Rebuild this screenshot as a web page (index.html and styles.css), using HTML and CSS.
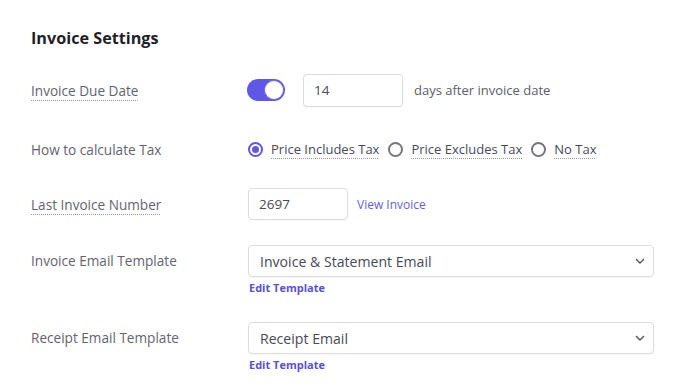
FILE: index.html
```html
<!DOCTYPE html>
<html lang="en">
<head>
    <meta charset="UTF-8">
    <meta name="viewport" content="width=device-width, initial-scale=1.0">
    <title>Invoice Settings</title>
    <link rel="stylesheet" href="styles.css">
</head>
<body>
    <div class="settings">
        <h2>Invoice Settings</h2>

        <div class="row row-due">
            <div class="label"><span class="hint">Invoice Due Date</span></div>
            <div class="field">
                <label class="switch">
                    <input type="checkbox" checked>
                    <span class="slider"></span>
                </label>
                <input type="text" class="input input-days" value="14">
                <span class="suffix">days after invoice date</span>
            </div>
        </div>

        <div class="row row-tax">
            <div class="label">How to calculate Tax</div>
            <div class="field radios">
                <label class="radio"><input type="radio" name="tax" checked><span class="hint">Price Includes Tax</span></label>
                <label class="radio"><input type="radio" name="tax"><span class="hint">Price Excludes Tax</span></label>
                <label class="radio"><input type="radio" name="tax"><span class="hint">No Tax</span></label>
            </div>
        </div>

        <div class="row row-number">
            <div class="label"><span class="hint">Last Invoice Number</span></div>
            <div class="field">
                <input type="text" class="input input-number" value="2697">
                <a href="#" class="view-link">View Invoice</a>
            </div>
        </div>

        <div class="row row-template">
            <div class="label">Invoice Email Template</div>
            <div class="field column">
                <select class="select">
                    <option>Invoice &amp; Statement Email</option>
                </select>
                <a href="#" class="edit-link">Edit Template</a>
            </div>
        </div>

        <div class="row row-template row-receipt">
            <div class="label">Receipt Email Template</div>
            <div class="field column">
                <select class="select">
                    <option>Receipt Email</option>
                </select>
                <a href="#" class="edit-link">Edit Template</a>
            </div>
        </div>
    </div>
</body>
</html>
```

FILE: styles.css
```css
* {
    margin: 0;
    padding: 0;
    box-sizing: border-box;
    font-family: 'Open Sans', 'Noto Sans', sans-serif;
}

body {
    background: #fff;
    color: #3d3d48;
}

.settings {
    padding: 27px 34px 0 31px;
}

.settings h2 {
    font-size: 16.2px;
    font-weight: 700;
    line-height: 22px;
    color: #1f1f29;
    margin-bottom: 24px;
}

.row {
    display: flex;
    align-items: center;
}

.label {
    width: 217px;
    flex-shrink: 0;
    font-size: 13.6px;
    font-weight: 500;
    color: #64646f;
}

.hint {
    text-decoration: underline dotted #9a9aa6;
    text-decoration-thickness: 1px;
    text-underline-offset: 4px;
}

.field {
    display: flex;
    align-items: center;
    flex: 1;
}

.field.column {
    flex-direction: column;
    align-items: flex-start;
}

.row-due {
    height: 34px;
}

.row-tax {
    margin-top: 32px;
    height: 20px;
}

.row-number {
    margin-top: 29px;
    height: 32px;
}

.row-template {
    margin-top: 25px;
    align-items: flex-start;
}

.row-receipt {
    margin-top: 27px;
}

.row-template .label {
    line-height: 32px;
}

/* Toggle */
.switch {
    position: relative;
    display: inline-block;
    width: 38px;
    height: 22px;
    margin-left: -1px;
}

.switch input {
    display: none;
}

.slider {
    position: absolute;
    inset: 0;
    background: #5f57e6;
    border-radius: 11px;
}

.slider::before {
    content: '';
    position: absolute;
    top: 2px;
    right: 2px;
    width: 18px;
    height: 18px;
    background: #fff;
    border-radius: 50%;
    box-shadow: 0 0 0 1px #7a72ee;
}

/* Inputs */
.input {
    height: 33px;
    border: 1px solid #dcdce2;
    border-radius: 4px;
    padding: 0 10px;
    font-size: 13.5px;
    color: #4a4a55;
    outline: none;
    box-shadow: 0 1px 2px rgba(0, 0, 0, 0.04);
}

.input-days {
    width: 100px;
    margin-left: 18px;
}

.input-number {
    width: 100px;
    height: 32px;
}

.suffix {
    margin-left: 11px;
    font-size: 13px;
    color: #5d5d6a;
}

/* Radios */
.radios {
    gap: 9px;
}

.radio {
    display: flex;
    align-items: center;
    gap: 8px;
    font-size: 13px;
    color: #4a4a55;
}

.radio input {
    appearance: none;
    width: 15px;
    height: 15px;
    border: 2px solid #75757f;
    border-radius: 50%;
    margin: 0;
    position: relative;
}

.radio input:checked {
    border-color: #5f57e6;
}

.radio input:checked::after {
    content: '';
    position: absolute;
    top: 2px;
    left: 2px;
    width: 7px;
    height: 7px;
    border-radius: 50%;
    background: #5f57e6;
}

/* Links */
.view-link {
    margin-left: 9px;
    font-size: 12px;
    color: #6a60d8;
    text-decoration: none;
}

.edit-link {
    margin-top: 4px;
    margin-left: 1px;
    font-size: 11px;
    font-weight: 700;
    line-height: 14px;
    color: #5a51d6;
    text-decoration: none;
}

/* Select */
.select {
    appearance: none;
    width: 406px;
    height: 32px;
    border: 1px solid #dcdce2;
    border-radius: 4px;
    padding: 0 30px 0 11px;
    font-size: 14.1px;
    color: #4a4a55;
    background: #fff url("data:image/svg+xml,%3Csvg xmlns='http://www.w3.org/2000/svg' width='10' height='6' viewBox='0 0 10 6'%3E%3Cpath d='M1 1l4 4 4-4' fill='none' stroke='%23555' stroke-width='1.4'/%3E%3C/svg%3E") no-repeat right 8px center;
    box-shadow: 0 1px 2px rgba(0, 0, 0, 0.04);
    outline: none;
}
```
